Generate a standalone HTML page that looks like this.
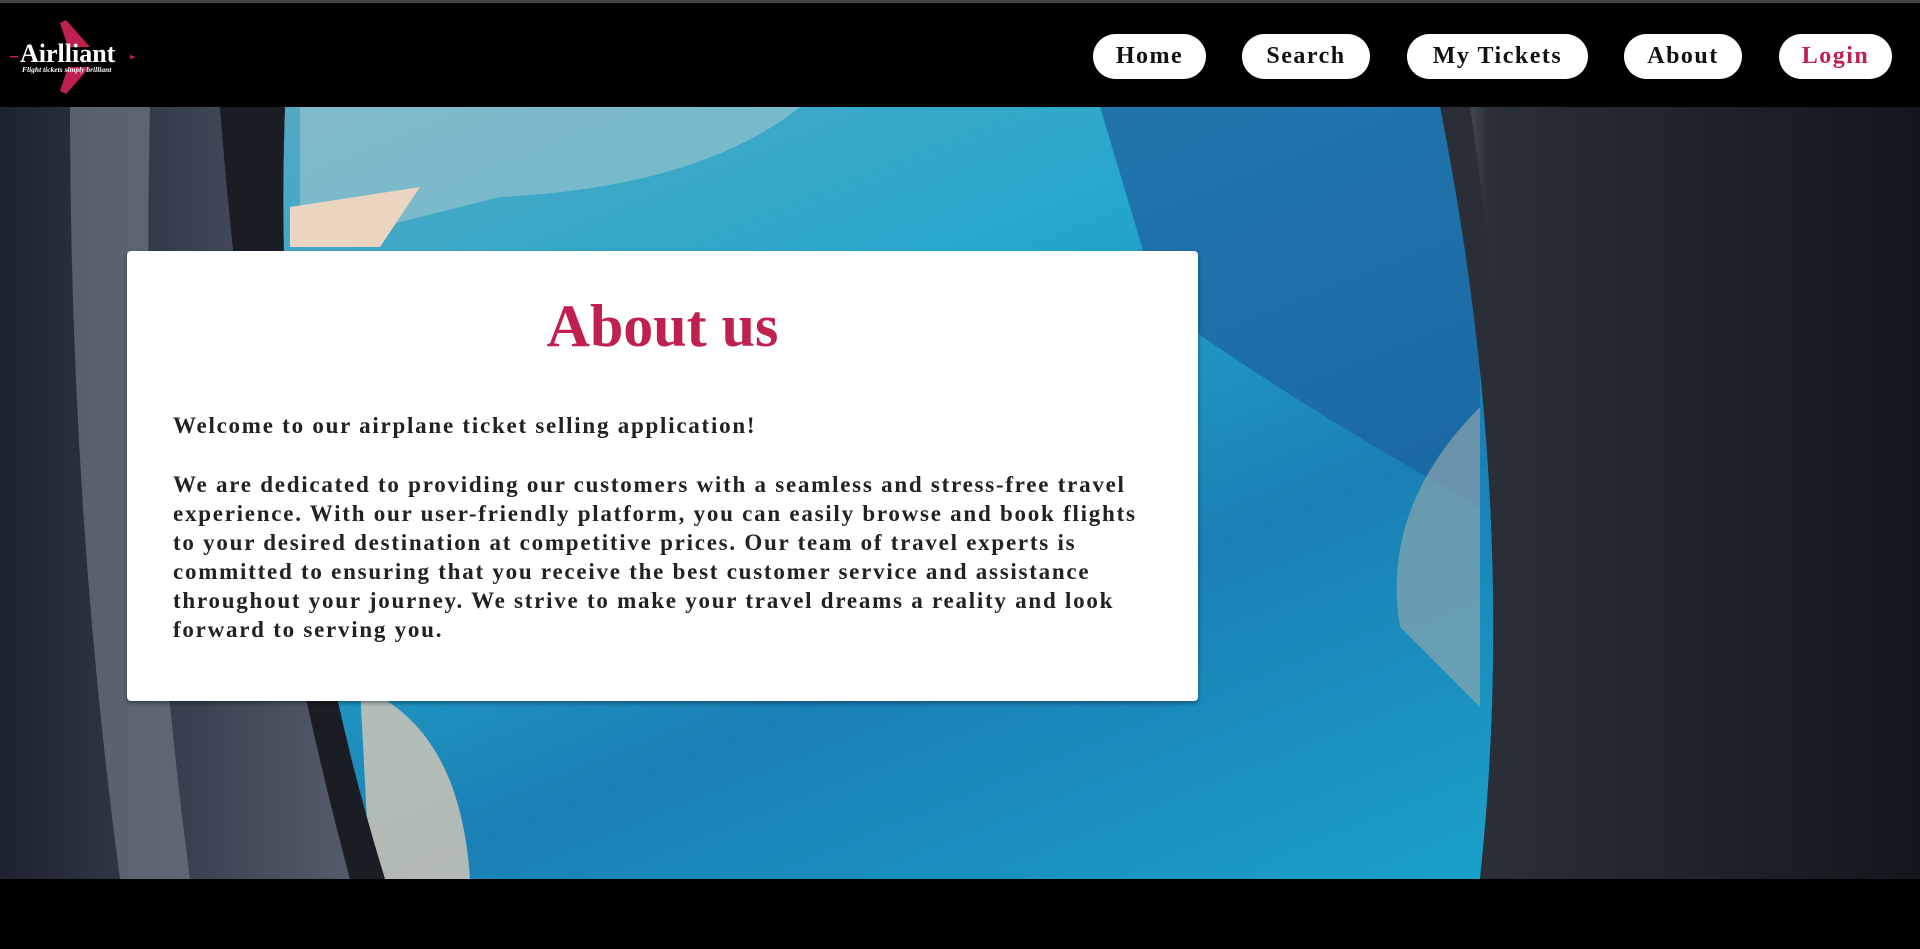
<!DOCTYPE html>
<html><head><meta charset="utf-8"><style>
*{margin:0;padding:0;box-sizing:border-box}
html,body{width:1920px;height:949px;background:#000;overflow:hidden;font-family:"Liberation Serif",serif}
.top{position:absolute;left:0;top:0;width:1920px;height:3px;background:#444}
header{position:absolute;left:0;top:3px;width:1920px;height:104px;background:#000}
.logo{position:absolute;left:8px;top:14px;width:130px;height:80px}
.nav a{position:absolute;top:31px;height:45px;background:#fff;border-radius:23px;color:#111;font-weight:bold;font-size:24px;letter-spacing:1.5px;text-align:center;line-height:45px;text-decoration:none}
.bg{position:absolute;left:0;top:107px;width:1920px;height:772px}
.card{position:absolute;left:127px;top:251px;width:1071px;height:450px;background:#fff;border-radius:4px;box-shadow:0 2px 4px rgba(0,0,0,.4)}
.card h1{position:absolute;left:0;width:100%;text-align:center;color:#c0204e;font-size:60px;font-weight:bold;line-height:1}
.card p{position:absolute;left:46px;width:985px;color:#222;font-size:23px;font-weight:bold;line-height:29px;letter-spacing:1.75px}
</style></head><body>
<div class="top"></div>
<header>
<svg class="logo" viewBox="0 0 130 80">
<path d="M52 6 L58 3 L82 30 L60 30 Z" fill="#c0204e"/>
<path d="M52 74 L58 77 L82 50 L60 50 Z" fill="#c0204e"/>
<path d="M128 40 l-6 -2 v4 z" fill="#c0204e"/>
<rect x="2" y="39" width="8" height="1.5" fill="#c0204e"/>
<text x="12" y="45" fill="#fff" font-family="Liberation Serif,serif" font-size="26" font-weight="bold">Airlliant</text>
<text x="14" y="55" fill="#fff" font-family="Liberation Serif,serif" font-size="7.5" font-style="italic" font-weight="bold">Flight tickets simply brilliant</text>
</svg>
<div class="nav">
<a style="left:1093px;width:113px">Home</a>
<a style="left:1242px;width:128px">Search</a>
<a style="left:1407px;width:181px">My Tickets</a>
<a style="left:1624px;width:118px">About</a>
<a style="left:1779px;width:113px;color:#c0204e">Login</a>
</div>
</header>
<svg class="bg" viewBox="0 0 1920 772" preserveAspectRatio="none">
<defs>
<linearGradient id="oc" x1="0" y1="0" x2="1" y2="1">
<stop offset="0" stop-color="#5fa8c0"/><stop offset=".35" stop-color="#25a8cc"/><stop offset=".6" stop-color="#1a7fb5"/><stop offset="1" stop-color="#1aaed0"/>
</linearGradient>
<linearGradient id="lf" x1="0" x2="1"><stop offset="0" stop-color="#1c2230"/><stop offset=".5" stop-color="#3a4150"/><stop offset="1" stop-color="#5a6270"/></linearGradient>
<linearGradient id="rf" x1="0" x2="1"><stop offset="0" stop-color="#6a7078"/><stop offset=".1" stop-color="#2a2f38"/><stop offset="1" stop-color="#13161d"/></linearGradient>
</defs>
<rect width="1920" height="772" fill="url(#oc)"/>
<path d="M1100 0 L1480 0 L1480 400 Q1300 300 1160 200 Z" fill="#1d5f9c" opacity=".7"/>
<path d="M300 0 L800 0 Q700 80 500 90 L300 140 Z" fill="#9fc7cf" opacity=".6"/>
<path d="M290 100 L420 80 L380 140 L290 140 Z" fill="#e9d5c0"/>
<path d="M1480 300 Q1380 400 1400 520 L1480 600 Z" fill="#8aa5ad" opacity=".7"/>
<path d="M360 580 Q460 620 470 772 L370 772 Z" fill="#d8c8b5" opacity=".8"/>
<path d="M0 0 H285 Q270 400 385 772 H0 Z" fill="url(#lf)"/>
<path d="M70 0 H150 Q140 400 190 772 H120 Q70 400 70 0Z" fill="#7a828d" opacity=".6"/>
<path d="M220 0 H285 Q270 400 385 772 H350 Q250 400 220 0Z" fill="#1a1d24"/>
<path d="M1440 0 H1920 V772 H1480 Q1520 400 1440 0Z" fill="url(#rf)"/>
<path d="M1440 0 H1470 Q1530 400 1495 772 H1480 Q1520 400 1440 0Z" fill="#2a2e36"/>
</svg>
<div class="card">
<h1 style="top:45px">About us</h1>
<p style="top:160px">Welcome to our airplane ticket selling application!</p>
<p style="top:219px">We are dedicated to providing our customers with a seamless and stress-free travel experience. With our user-friendly platform, you can easily browse and book flights to your desired destination at competitive prices. Our team of travel experts is committed to ensuring that you receive the best customer service and assistance throughout your journey. We strive to make your travel dreams a reality and look forward to serving you.</p>
</div>
</body></html>
